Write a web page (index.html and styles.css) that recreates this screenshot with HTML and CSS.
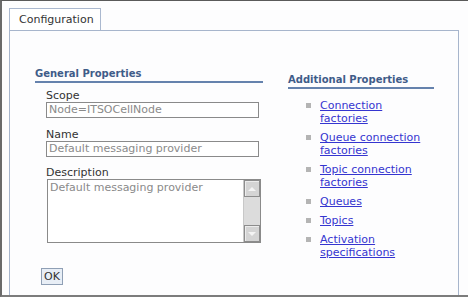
FILE: index.html
```html
<!DOCTYPE html>
<html lang="en">
<head>
    <meta charset="UTF-8">
    <title>Configuration</title>
    <link rel="stylesheet" href="styles.css">
</head>
<body>
    <div class="frame">
        <div class="tabs">
            <div class="tab">Configuration</div>
        </div>
        <div class="panel">
            <div class="general">
                <h2 class="section-title">General Properties</h2>
                <div class="field">
                    <label>Scope</label>
                    <div class="input">Node=ITSOCellNode</div>
                </div>
                <div class="field">
                    <label>Name</label>
                    <div class="input">Default messaging provider</div>
                </div>
                <div class="field">
                    <label class="desc-label">Description</label>
                    <div class="textarea">
                        <div class="textarea-text">Default messaging provider</div>
                        <div class="scrollbar">
                            <div class="scroll-btn"><span class="arrow up"></span></div>
                            <div class="scroll-track"></div>
                            <div class="scroll-btn"><span class="arrow down"></span></div>
                        </div>
                    </div>
                </div>
                <button class="ok">OK</button>
            </div>
            <div class="additional">
                <h2 class="section-title">Additional Properties</h2>
                <ul class="links">
                    <li><a href="#">Connection factories</a></li>
                    <li><a href="#">Queue connection factories</a></li>
                    <li><a href="#">Topic connection factories</a></li>
                    <li><a href="#">Queues</a></li>
                    <li><a href="#">Topics</a></li>
                    <li><a href="#">Activation specifications</a></li>
                </ul>
            </div>
        </div>
    </div>
</body>
</html>
```

FILE: styles.css
```css
* {
    box-sizing: border-box;
}

body {
    margin: 0;
    font-family: "DejaVu Sans", Verdana, sans-serif;
    font-size: 11px;
    color: #333;
    background: #fff;
}

.frame {
    width: 468px;
    height: 297px;
    overflow: hidden;
    background: #fdfdfe;
    border-top: 1px solid #5a5a5a;
    border-left: 2px solid #6a6a6a;
    border-bottom: 2px solid #7c7c7c;
    padding: 7px 0 0 7px;
}

.tabs {
    display: flex;
}

.tab {
    width: 92px;
    height: 22px;
    border: 1px solid #aab8cf;
    border-bottom: none;
    background: #fff;
    padding: 4px 0 0 9px;
    color: #333;
}

.panel {
    width: 450px;
    height: 300px;
    border: 1px solid #a7b5cc;
    background: #fdfdfe;
    display: flex;
    padding: 37px 0 0 25px;
}

.section-title {
    margin: 0;
    font-size: 10px;
    font-weight: bold;
    color: #3f5c89;
    border-bottom: 2px solid #6582ad;
    padding-bottom: 1px;
    line-height: 12px;
}

.general {
    width: 228px;
}

.field {
    margin: 0 0 0 11px;
}

.field label {
    display: block;
    font-size: 11px;
    line-height: 13px;
    margin-top: 6px;
    color: #333;
}

.input {
    width: 213px;
    height: 16px;
    border: 1px solid #8a8a8a;
    background: #fff;
    color: #8a8a8a;
    padding: 0 2px;
    line-height: 14px;
    white-space: nowrap;
}

.field + .field label {
    margin-top: 10px;
}

.field + .field .desc-label {
    margin-top: 9px;
}

.textarea {
    width: 214px;
    height: 64px;
    border: 1px solid #8a8a8a;
    background: #fff;
    display: flex;
    margin-left: 1px;
}

.textarea-text {
    flex: 1;
    color: #8a8a8a;
    padding: 1px 2px;
    line-height: 13px;
}

.scrollbar {
    width: 17px;
    display: flex;
    flex-direction: column;
    background: #dcdcdc;
    border-left: 1px solid #c8c8c8;
}

.scroll-btn {
    height: 17px;
    border: 1px solid #8c8c8c;
    background: #d4d4d4;
    box-shadow: inset 1px 1px 0 #ececec;
    display: flex;
    align-items: center;
    justify-content: center;
}

.scroll-track {
    flex: 1;
}

.arrow {
    width: 0;
    height: 0;
    border-left: 4px solid transparent;
    border-right: 4px solid transparent;
}

.arrow.up {
    border-bottom: 4px solid #f4f4f4;
}

.arrow.down {
    border-top: 4px solid #f4f4f4;
}

.ok {
    display: block;
    margin: 25px 0 0 6px;
    font-family: "DejaVu Sans", Verdana, sans-serif;
    font-size: 11px;
    height: 17px;
    width: 22px;
    padding: 0;
    border: 1px solid #8f9fb5;
    background: #e8eef6;
    color: #333;
}

.additional {
    width: 146px;
    margin-left: 25px;
    padding-top: 6px;
}

.links {
    list-style: none;
    margin: 0;
    padding: 10px 0 0 32px;
}

.links li {
    position: relative;
    line-height: 13px;
    margin-bottom: 6px;
    width: 110px;
}

.links li::before {
    content: "";
    position: absolute;
    left: -14px;
    top: 4px;
    width: 5px;
    height: 5px;
    background: #b4b4b4;
}

.links a {
    color: #3535d0;
    text-decoration: underline;
}
```
